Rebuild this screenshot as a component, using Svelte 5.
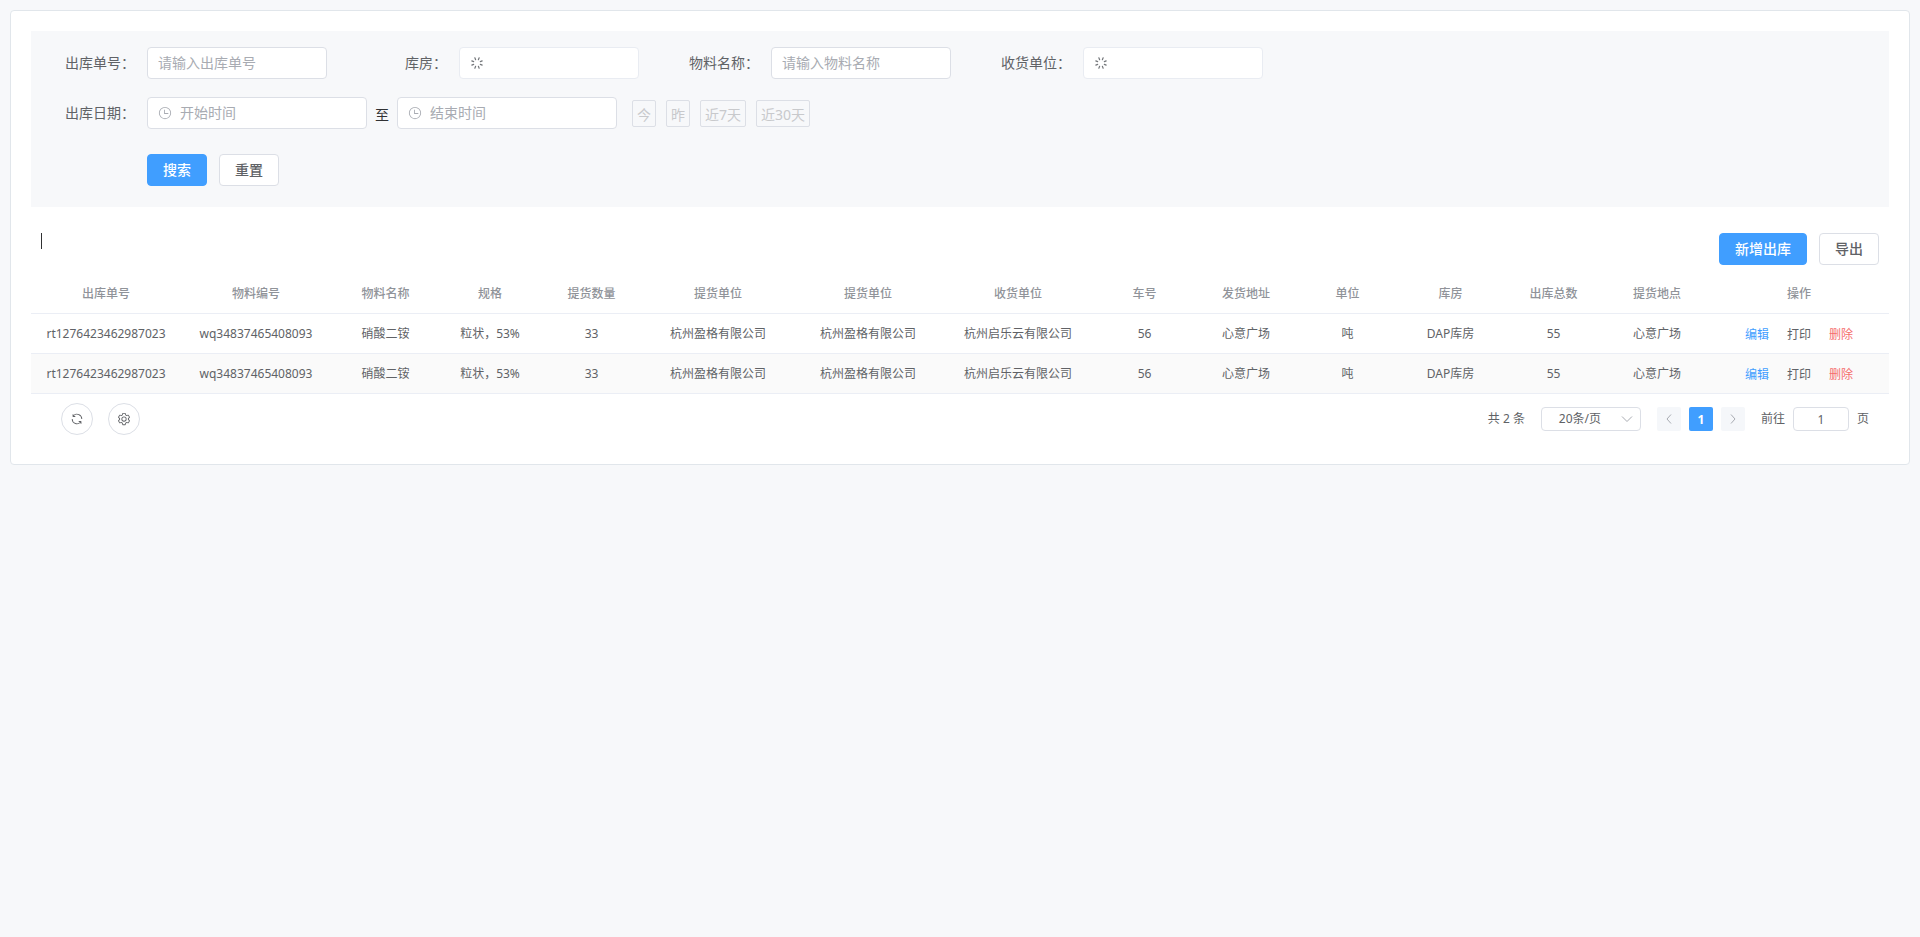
<script lang="ts">
	type OutboundRow = {
		id: number;
		cells: string[];
	};

	type Column = {
		label: string;
		width: number;
	};

	const columns: Column[] = [
		{ label: '出库单号', width: 150 },
		{ label: '物料编号', width: 150 },
		{ label: '物料名称', width: 109 },
		{ label: '规格', width: 100 },
		{ label: '提货数量', width: 103 },
		{ label: '提货单位', width: 150 },
		{ label: '提货单位', width: 150 },
		{ label: '收货单位', width: 150 },
		{ label: '车号', width: 103 },
		{ label: '发货地址', width: 100 },
		{ label: '单位', width: 103 },
		{ label: '库房', width: 103 },
		{ label: '出库总数', width: 103 },
		{ label: '提货地点', width: 104 },
		{ label: '操作', width: 180 }
	];

	const record = [
		'rt1276423462987023',
		'wq34837465408093',
		'硝酸二铵',
		'粒状，53%',
		'33',
		'杭州盈格有限公司',
		'杭州盈格有限公司',
		'杭州启乐云有限公司',
		'56',
		'心意广场',
		'吨',
		'DAP库房',
		'55',
		'心意广场'
	];

	const rows: OutboundRow[] = [
		{ id: 1, cells: record },
		{ id: 2, cells: record }
	];

	const ranges = ['今', '昨', '近7天', '近30天'];
	const spokes = [0, 45, 90, 135, 180, 225, 270, 315];

	let orderNo = $state('');
	let warehouse = $state('');
	let materialName = $state('');
	let receiver = $state('');
	let startTime = $state('');
	let endTime = $state('');
	let pageSize = $state('20');
	let jumpTo = $state('1');

	const totalWidth = columns.reduce((sum, column) => sum + column.width, 0);

	function resetForm() {
		orderNo = '';
		warehouse = '';
		materialName = '';
		receiver = '';
		startTime = '';
		endTime = '';
	}
</script>

{#snippet loadingIcon()}
	<svg class="icon loading" viewBox="0 0 14 14" aria-hidden="true">
		{#each spokes as angle (angle)}
			<path d="M7 1.4v2" transform={`rotate(${angle + 22.5} 7 7)`} />
		{/each}
	</svg>
{/snippet}

{#snippet clockIcon()}
	<svg class="icon" viewBox="0 0 1024 1024" aria-hidden="true">
		<path d="M512 896a384 384 0 1 0 0-768 384 384 0 0 0 0 768zm0 64a448 448 0 1 1 0-896 448 448 0 0 1 0 896z" />
		<path d="M480 256a32 32 0 0 1 32 32v256a32 32 0 0 1-64 0V288a32 32 0 0 1 32-32z" />
		<path d="M480 512h256q32 0 32 32t-32 32H480q-32 0-32-32t32-32z" />
	</svg>
{/snippet}

<main class="card">
	<form class="filters" onsubmit={(e) => e.preventDefault()}>
		<div class="filter-items">
			<div class="form-item">
				<label class="item-label" for="order-no">出库单号：</label>
				<div class="field">
					<input id="order-no" type="text" placeholder="请输入出库单号" bind:value={orderNo} />
				</div>
			</div>
			<div class="form-item">
				<label class="item-label" for="warehouse">库房：</label>
				<div class="field pending">
					{@render loadingIcon()}
					<select id="warehouse" bind:value={warehouse}>
						<option value=""></option>
					</select>
				</div>
			</div>
			<div class="form-item">
				<label class="item-label" for="material-name">物料名称：</label>
				<div class="field">
					<input id="material-name" type="text" placeholder="请输入物料名称" bind:value={materialName} />
				</div>
			</div>
			<div class="form-item">
				<label class="item-label" for="receiver">收货单位：</label>
				<div class="field pending">
					{@render loadingIcon()}
					<select id="receiver" bind:value={receiver}>
						<option value=""></option>
					</select>
				</div>
			</div>
			<div class="form-item">
				<label class="item-label" for="start-time">出库日期：</label>
				<div class="field date">
					{@render clockIcon()}
					<input id="start-time" type="text" placeholder="开始时间" bind:value={startTime} />
				</div>
				<span class="separator">至</span>
				<div class="field date">
					{@render clockIcon()}
					<input type="text" aria-label="结束时间" placeholder="结束时间" bind:value={endTime} />
				</div>
				<div class="ranges">
					{#each ranges as range (range)}
						<button type="button" class="range">{range}</button>
					{/each}
				</div>
			</div>
		</div>
		<div class="filter-actions">
			<button type="submit" class="btn primary">搜索</button>
			<button type="button" class="btn" onclick={resetForm}>重置</button>
		</div>
	</form>

	<div class="toolbar">
		<span class="title-bar"></span>
		<div class="toolbar-actions">
			<button type="button" class="btn primary">新增出库</button>
			<button type="button" class="btn">导出</button>
		</div>
	</div>

	<table>
		<colgroup>
			{#each columns as column, i (i)}
				<col style={`width: ${(column.width / totalWidth) * 100}%`} />
			{/each}
		</colgroup>
		<thead>
			<tr>
				{#each columns as column, i (i)}
					<th scope="col">{column.label}</th>
				{/each}
			</tr>
		</thead>
		<tbody>
			{#each rows as row (row.id)}
				<tr>
					{#each row.cells as cell, i (i)}
						<td>{cell}</td>
					{/each}
					<td>
						<div class="row-actions">
							<button type="button" class="link edit">编辑</button>
							<button type="button" class="link">打印</button>
							<button type="button" class="link delete">删除</button>
						</div>
					</td>
				</tr>
			{/each}
		</tbody>
	</table>

	<footer>
		<div class="tools">
			<button type="button" class="round" aria-label="刷新">
				<svg class="icon" viewBox="0 0 1024 1024" aria-hidden="true">
					<path d="M771.776 794.88A384 384 0 0 1 128 512h64a320 320 0 0 0 555.712 216.448H654.72a32 32 0 1 1 0-64h149.056a32 32 0 0 1 32 32v148.928a32 32 0 1 1-64 0v-50.56zM276.288 295.616h92.992a32 32 0 0 1 0 64H220.16a32 32 0 0 1-32-32V178.56a32 32 0 0 1 64 0v50.56A384 384 0 0 1 896.128 512h-64a320 320 0 0 0-555.776-216.384z" />
				</svg>
			</button>
			<button type="button" class="round" aria-label="设置">
				<svg class="icon" viewBox="0 0 1024 1024" aria-hidden="true">
					<path d="M600.704 64a32 32 0 0 1 30.464 22.208l35.2 109.376c14.784 7.232 28.928 15.36 42.432 24.512l112.384-24.192a32 32 0 0 1 34.432 15.36L944.32 364.8a32 32 0 0 1-4.032 37.504l-77.12 85.12a357.12 357.12 0 0 1 0 49.024l77.12 85.248a32 32 0 0 1 4.032 37.504l-88.704 153.6a32 32 0 0 1-34.432 15.296L708.8 803.904c-13.44 9.088-27.648 17.28-42.368 24.512l-35.264 109.376A32 32 0 0 1 600.704 960H423.296a32 32 0 0 1-30.464-22.208L357.696 828.48a351.616 351.616 0 0 1-42.56-24.64l-112.32 24.256a32 32 0 0 1-34.432-15.36L79.68 659.2a32 32 0 0 1 4.032-37.504l77.12-85.248a357.12 357.12 0 0 1 0-48.896l-77.12-85.248A32 32 0 0 1 79.68 364.8l88.704-153.6a32 32 0 0 1 34.432-15.296l112.32 24.256c13.568-9.152 27.776-17.408 42.56-24.64l35.2-109.312A32 32 0 0 1 423.232 64H600.64zm-23.424 64H446.72l-36.352 113.088-24.512 11.968a294.113 294.113 0 0 0-34.816 20.096l-22.656 15.36-116.224-25.088-65.28 113.152 79.68 88.192-1.92 27.136a293.12 293.12 0 0 0 0 40.192l1.92 27.136-79.808 88.192 65.344 113.152 116.224-25.024 22.656 15.296a294.113 294.113 0 0 0 34.816 20.096l24.512 11.968L446.72 896h130.688l36.48-113.152 24.448-11.904a288.282 288.282 0 0 0 34.752-20.096l22.592-15.296 116.288 25.024 65.28-113.152-79.744-88.192 1.92-27.136a293.12 293.12 0 0 0 0-40.256l-1.92-27.136 79.808-88.128-65.344-113.152-116.288 24.96-22.592-15.232a287.616 287.616 0 0 0-34.752-20.096l-24.448-11.904L577.344 128zM512 320a192 192 0 1 1 0 384 192 192 0 0 1 0-384zm0 64a128 128 0 1 0 0 256 128 128 0 0 0 0-256z" />
				</svg>
			</button>
		</div>

		<nav class="pagination" aria-label="分页">
			<span class="total">共 2 条</span>
			<div class="size-box">
				<select aria-label="每页条数" bind:value={pageSize}>
					<option value="20">20条/页</option>
					<option value="50">50条/页</option>
				</select>
				<svg class="arrow" viewBox="0 0 12 12" aria-hidden="true"><path d="M1 3.5l5 5 5-5" /></svg>
			</div>
			<div class="pager">
				<button type="button" class="page" aria-label="上一页" disabled>
					<svg class="arrow" viewBox="0 0 12 12" aria-hidden="true"><path d="M8 1.5L4 6l4 4.5" /></svg>
				</button>
				<button type="button" class="page current">1</button>
				<button type="button" class="page" aria-label="下一页" disabled>
					<svg class="arrow" viewBox="0 0 12 12" aria-hidden="true"><path d="M4 1.5L8 6l-4 4.5" /></svg>
				</button>
			</div>
			<div class="jump">
				<label for="jump-to">前往</label>
				<input id="jump-to" type="text" bind:value={jumpTo} />
				<span>页</span>
			</div>
		</nav>
	</footer>
</main>

<style>
	:global(body) {
		background: #f7f8fa;
	}

	.card,
	button,
	input,
	select {
		font-family: 'Noto Sans', 'Noto Sans CJK SC', sans-serif;
		font-size: 14px;
	}

	.card {
		box-sizing: border-box;
		margin: 10px;
		padding: 20px 20px 9px;
		background: #fff;
		border: 1px solid #e1e6eb;
		border-radius: 4px;
		color: #606266;
		line-height: 20px;
	}

	button,
	input,
	select {
		box-sizing: border-box;
		margin: 0;
		color: inherit;
	}

	button {
		cursor: pointer;
	}

	.icon {
		flex: none;
		width: 14px;
		height: 14px;
		fill: currentColor;
	}

	.loading {
		fill: none;
		stroke: #73767a;
		stroke-width: 1.2;
		stroke-linecap: round;
	}

	/* Filter form */
	.filters {
		padding: 16px 16px 21px;
		background: #f7f8fa;
	}

	.filter-items {
		display: flex;
		flex-wrap: wrap;
		gap: 18px 32px;
	}

	.form-item {
		display: flex;
		align-items: center;
	}

	.item-label {
		box-sizing: border-box;
		width: 100px;
		padding-right: 12px;
		text-align: right;
		white-space: nowrap;
	}

	.field {
		box-sizing: border-box;
		display: flex;
		align-items: center;
		gap: 8px;
		width: 180px;
		height: 32px;
		padding: 0 10px;
		background: #fff;
		border: 1px solid #dcdfe6;
		border-radius: 4px;
		color: #a8abb2;
	}

	.field.pending {
		border-color: #e9ecf2;
	}

	.field.date {
		width: 220px;
	}

	.field input,
	.field select {
		flex: 1;
		min-width: 0;
		height: 30px;
		padding: 0 0 2px;
		appearance: none;
		background: none;
		border: none;
		color: #606266;
		outline: none;
	}

	.field input::placeholder {
		color: #a8abb2;
		opacity: 1;
	}

	.separator {
		width: 30px;
		padding-top: 4px;
		color: #303133;
		text-align: center;
	}

	.ranges {
		display: flex;
		gap: 10px;
		margin-left: 15px;
	}

	.range {
		height: 27px;
		padding: 4px 4px 0;
		background: none;
		border: 1px solid #dcdfe6;
		border-radius: 2px;
		color: #c8c9cc;
		line-height: 20px;
	}

	.filter-actions {
		display: flex;
		gap: 12px;
		margin: 25px 0 0 100px;
	}

	.btn {
		height: 32px;
		padding: 0 15px 2px;
		background: #fff;
		border: 1px solid #dcdfe6;
		border-radius: 4px;
		font-weight: 500;
	}

	.btn.primary {
		background: #409eff;
		border-color: #409eff;
		color: #fff;
	}

	/* Toolbar above the table */
	.toolbar {
		display: flex;
		justify-content: space-between;
		padding: 26px 10px 9px;
	}

	.title-bar {
		width: 1px;
		height: 16px;
		background: #303133;
	}

	.toolbar-actions {
		display: flex;
		gap: 12px;
	}

	/* Table */
	table {
		width: 100%;
		table-layout: fixed;
		border-collapse: separate;
		border-spacing: 0;
		font-size: 12px;
	}

	th,
	td {
		box-sizing: border-box;
		height: 40px;
		padding: 0;
		border-bottom: 1px solid #ebeef5;
		text-align: center;
		white-space: nowrap;
	}

	th {
		color: #909399;
		font-weight: 500;
	}

	tbody tr:nth-child(even) {
		background: #fafafa;
	}

	.row-actions {
		display: flex;
		justify-content: center;
		gap: 18px;
	}

	.link {
		padding: 2px 0 0;
		background: none;
		border: none;
		font-size: 12px;
		line-height: 20px;
	}

	.link.edit {
		color: #409eff;
	}

	.link.delete {
		color: #f56c6c;
	}

	/* Footer tools and pagination */
	footer {
		display: flex;
		align-items: center;
		justify-content: space-between;
		padding: 9px 20px 20px 30px;
		font-size: 12px;
	}

	.tools {
		display: flex;
		gap: 15px;
	}

	.round {
		display: flex;
		align-items: center;
		justify-content: center;
		width: 32px;
		height: 32px;
		padding: 0;
		background: #fff;
		border: 1px solid #dcdfe6;
		border-radius: 50%;
	}

	.pagination {
		display: flex;
		align-items: center;
		gap: 16px;
	}

	.size-box {
		box-sizing: border-box;
		display: grid;
		align-items: center;
		width: 100px;
		height: 24px;
		border: 1px solid #dcdfe6;
		border-radius: 4px;
	}

	.size-box select {
		grid-area: 1 / 1;
		width: 100%;
		height: 22px;
		padding: 0 22px 2px 0;
		appearance: none;
		background: none;
		border: none;
		font-size: 12px;
		text-align: center;
		text-align-last: center;
	}

	.size-box .arrow {
		grid-area: 1 / 1;
		justify-self: end;
		margin-right: 7px;
		pointer-events: none;
	}

	.arrow {
		width: 12px;
		height: 12px;
		fill: none;
		stroke: #a8abb2;
	}

	.pager,
	.jump {
		display: flex;
		align-items: center;
		gap: 8px;
	}

	.page {
		display: flex;
		align-items: center;
		justify-content: center;
		width: 24px;
		height: 24px;
		padding: 0;
		background: #f5f7fa;
		border: none;
		border-radius: 2px;
		font-size: 12px;
	}

	.page.current {
		background: #409eff;
		color: #fff;
		font-weight: 700;
	}

	.jump input {
		width: 56px;
		height: 24px;
		padding: 0;
		background: #fff;
		border: 1px solid #dcdfe6;
		border-radius: 4px;
		font-size: 12px;
		text-align: center;
	}
</style>
